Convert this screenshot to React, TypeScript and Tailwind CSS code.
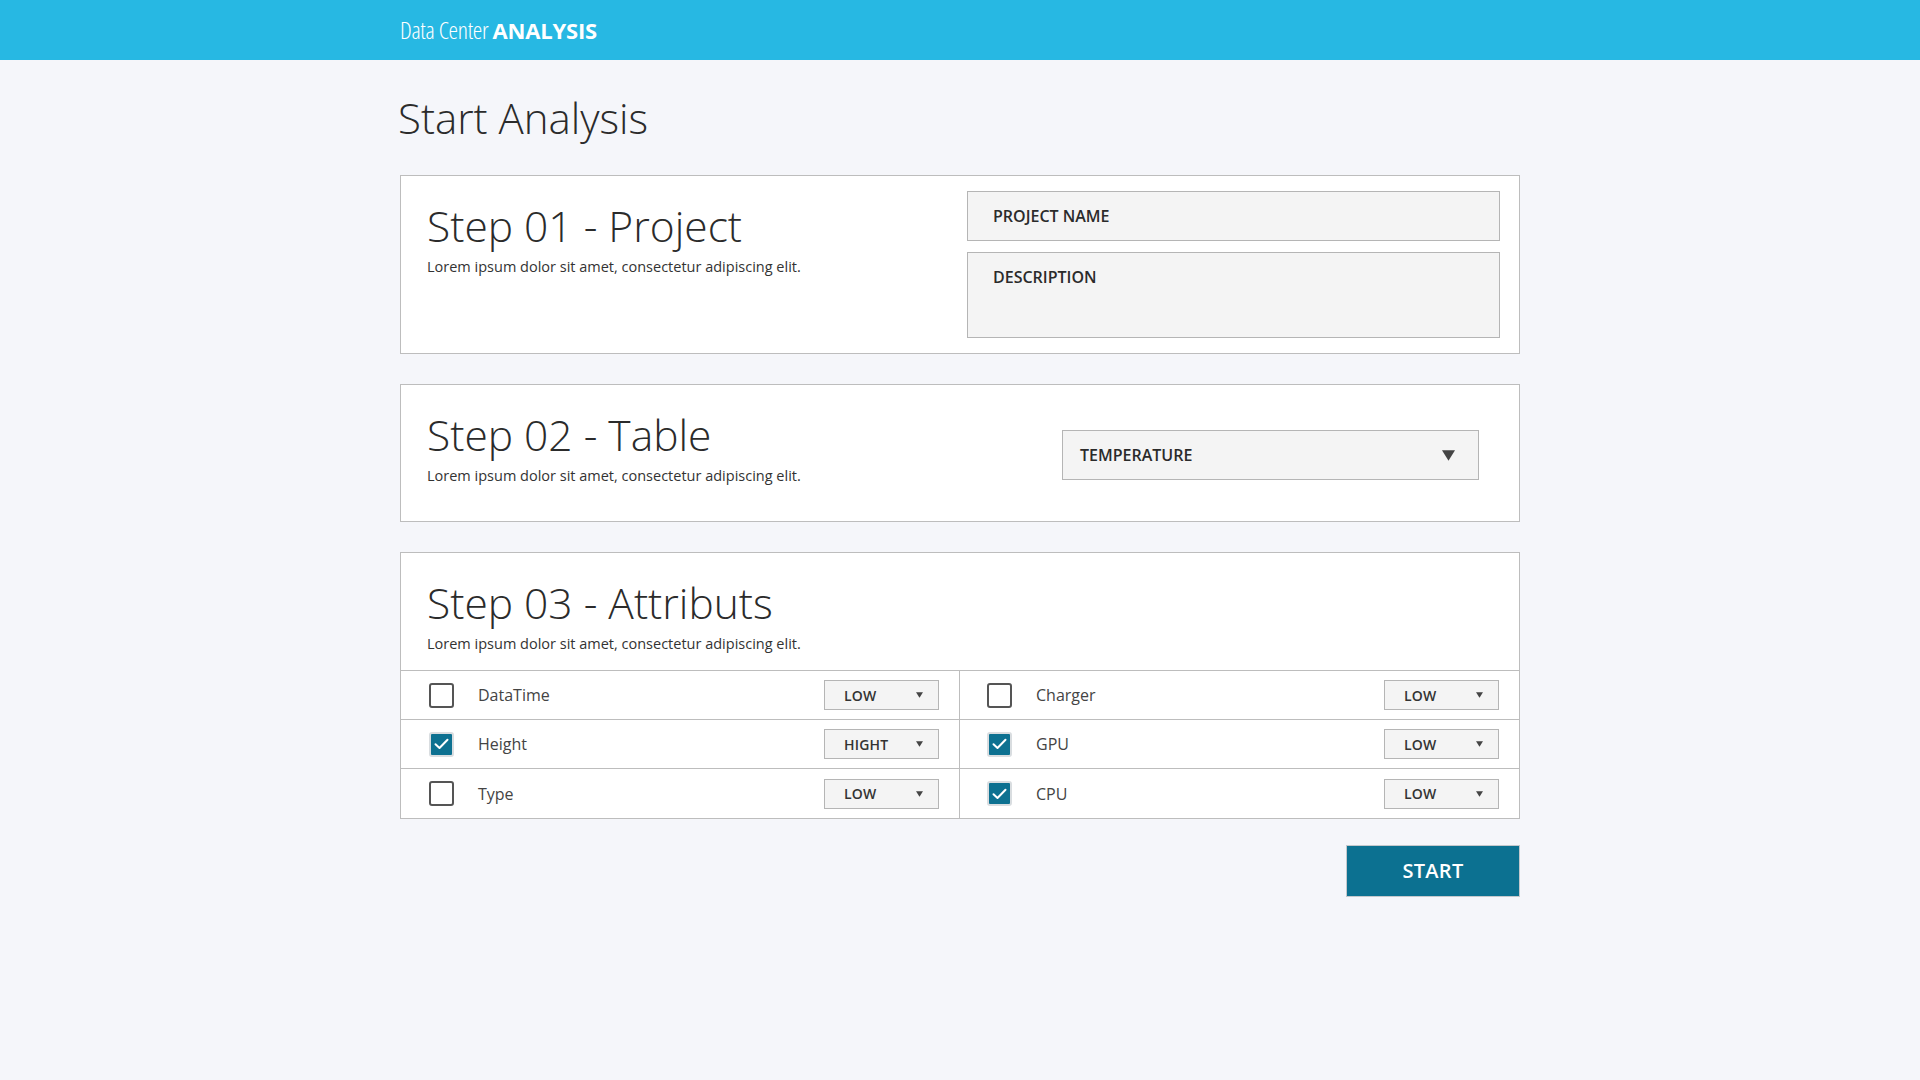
import React from 'react';

const FONT = { fontFamily: '"Open Sans", "Noto Sans", sans-serif' };

interface Attr {
  label: string;
  checked: boolean;
  level: string;
}

const LEFT: Attr[] = [
  { label: 'DataTime', checked: false, level: 'LOW' },
  { label: 'Height', checked: true, level: 'HIGHT' },
  { label: 'Type', checked: false, level: 'LOW' },
];

const RIGHT: Attr[] = [
  { label: 'Charger', checked: false, level: 'LOW' },
  { label: 'GPU', checked: true, level: 'LOW' },
  { label: 'CPU', checked: true, level: 'LOW' },
];

const StepHeading: React.FC<{ title: string }> = ({ title }) => (
  <div>
    <h2 className="text-[42.5px] font-light leading-[55px] text-[#2b2b2b]">{title}</h2>
    <p className="mt-[4px] text-[14.5px] leading-[20px] text-[#333]">
      Lorem ipsum dolor sit amet, consectetur adipiscing elit.
    </p>
  </div>
);

const Checkbox: React.FC<{ checked: boolean }> = ({ checked }) =>
  checked ? (
    <div className="w-[25px] h-[25px] rounded-[3px] border-2 border-[#d9dde0] bg-[#0d7191] flex items-center justify-center">
      <svg width="15" height="12" viewBox="0 0 15 12" fill="none">
        <path d="M1.5 6.2 L5.5 10 L13.5 1.8" stroke="#fff" strokeWidth="2" strokeLinecap="round" strokeLinejoin="round" />
      </svg>
    </div>
  ) : (
    <div className="w-[25px] h-[25px] rounded-[3px] border-2 border-[#555]" />
  );

const Caret: React.FC<{ w: number; h: number }> = ({ w, h }) => (
  <svg width={w} height={h} viewBox="0 0 10 8">
    <path d="M0 0 H10 L5 8 Z" fill="#444" />
  </svg>
);

const LevelSelect: React.FC<{ value: string }> = ({ value }) => (
  <div className="w-[115px] h-[30px] border border-[#b5b5b5] bg-[#f4f4f4] flex items-center justify-between pl-[19px] pr-[15px]">
    <span className="text-[14px] font-semibold text-[#333] tracking-[0.2px]">{value}</span>
    <Caret w={7} h={6} />
  </div>
);

const AttrRow: React.FC<{ attr: Attr; side: 'left' | 'right' }> = ({ attr, side }) => (
  <div
    className={`h-[49px] flex items-center pr-[20px] ${side === 'left' ? 'pl-[28px] border-r border-[#bdbdbd]' : 'pl-[27px]'}`}
  >
    <Checkbox checked={attr.checked} />
    <span className="ml-[24px] flex-1 text-[16px] text-[#444]">{attr.label}</span>
    <LevelSelect value={attr.level} />
  </div>
);

export default function App() {
  return (
    <div className="min-h-screen bg-[#f5f6fa]" style={FONT}>
      <header className="h-[60px] bg-[#27b8e3]">
        <div className="w-[1120px] mx-auto h-full flex items-center">
          <span className="text-[24px] text-white font-light font-stretch-condensed tracking-[-0.3px]">
            Data Center{' '}
            <span className="text-[22px] font-bold font-stretch-normal tracking-[-0.2px]">ANALYSIS</span>
          </span>
        </div>
      </header>

      <main className="w-[1120px] mx-auto">
        <h1 className="pt-[33px] mb-[32px] -ml-[2px] text-[42px] font-light leading-[50px] text-[#2b2b2b]">
          Start Analysis
        </h1>

        <section className="bg-white border border-[#bdbdbd] flex">
          <div className="flex-1 pl-[26px] pt-[22px]">
            <StepHeading title="Step 01 - Project" />
          </div>
          <div className="w-[533px] mr-[19px] py-[15px] flex flex-col gap-[11px]">
            <div className="h-[50px] border border-[#b5b5b5] bg-[#f4f4f4] flex items-center px-[25px]">
              <span className="text-[16px] font-semibold text-[#2b2b2b]">PROJECT NAME</span>
            </div>
            <div className="h-[86px] border border-[#b5b5b5] bg-[#f4f4f4] px-[25px] pt-[12px]">
              <span className="text-[16px] font-semibold text-[#2b2b2b]">DESCRIPTION</span>
            </div>
          </div>
        </section>

        <section className="mt-[30px] bg-white border border-[#bdbdbd] flex items-center">
          <div className="flex-1 pl-[26px] pt-[22px] pb-[35px]">
            <StepHeading title="Step 02 - Table" />
          </div>
          <div className="w-[417px] mr-[40px] mt-[4px] h-[50px] border border-[#b5b5b5] bg-[#f4f4f4] flex items-center justify-between pl-[17px] pr-[23px]">
            <span className="text-[16px] font-semibold text-[#2b2b2b]">TEMPERATURE</span>
            <Caret w={13} h={11} />
          </div>
        </section>

        <section className="mt-[30px] bg-white border border-[#bdbdbd]">
          <div className="pl-[26px] pt-[22px] pb-[16px]">
            <StepHeading title="Step 03 - Attributs" />
          </div>
          <div className="grid grid-cols-2 border-t border-[#bdbdbd]">
            <div className="flex flex-col divide-y divide-[#bdbdbd]">
              {LEFT.map((a) => (
                <AttrRow key={a.label} attr={a} side="left" />
              ))}
            </div>
            <div className="flex flex-col divide-y divide-[#bdbdbd]">
              {RIGHT.map((a) => (
                <AttrRow key={a.label} attr={a} side="right" />
              ))}
            </div>
          </div>
        </section>

        <div className="mt-[26px] flex justify-end">
          <button className="w-[174px] h-[52px] bg-[#0c7191] border border-[#c4c8cc] text-white text-[20px] font-semibold tracking-[0.3px]">
            START
          </button>
        </div>
      </main>
    </div>
  );
}
